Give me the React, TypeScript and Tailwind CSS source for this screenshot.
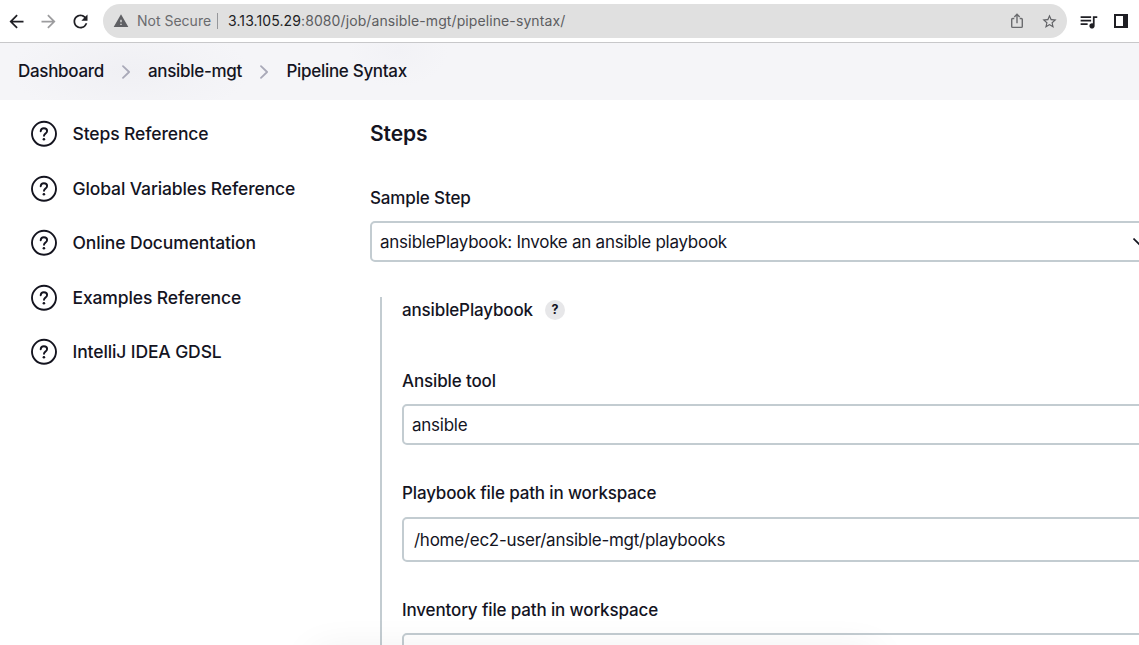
import type { ReactNode } from "react";
import { MdArrowBack, MdArrowForward, MdRefresh, MdWarning, MdStarBorder, MdQueueMusic } from "react-icons/md";

function Chevron() {
  return (
    <svg width="10" height="14" viewBox="0 0 10 14" fill="none" stroke="#a9a9b8" strokeWidth="1.8" className="shrink-0">
      <path d="M2 1.2 8.1 7 2 12.8" strokeLinecap="round" strokeLinejoin="round" />
    </svg>
  );
}

function HelpIcon() {
  return (
    <svg width="28" height="28" viewBox="0 0 28 28" fill="none" stroke="#14141f" strokeWidth="1.9" className="shrink-0">
      <circle cx="14" cy="13.800" r="12" />
      <path d="M10.7 11.200c.1-1.9 1.400-2.900 3.200-2.900 1.800 0 3.200 1 3.200 2.700 0 1.300-.8 2-1.700 2.600-1 .7-1.400 1.200-1.400 2.200" strokeLinecap="round" />
      <circle cx="13.9" cy="19.200" r="1.300" fill="#14141f" stroke="none" />
    </svg>
  );
}

function AddressBar() {
  return (
    <header className="flex h-[43px] items-center border-b border-[#c8c8ca] bg-white pl-[6px]">
      <MdArrowBack className="size-[21px] shrink-0 text-[#1f1f24]" />
      <MdArrowForward className="ml-[11px] size-[21px] shrink-0 text-[#9c9c9e]" />
      <MdRefresh className="ml-[11px] size-[21px] shrink-0 text-[#1f1f24]" />
      <div className="ml-3 flex h-[34px] w-[964px] shrink-0 items-center rounded-full bg-[#e0e0e0] pl-[10px] text-[14px]">
        <MdWarning className="size-4 shrink-0 text-[#5f6064]" />
        <span className="ml-2 w-[74px] pb-px whitespace-nowrap text-[#6a6b6e]">Not Secure</span>
        <span className="ml-[6px] h-4 w-px bg-[#96979a]" />
        <span className="ml-[10px] pb-px tracking-[0.1px] whitespace-nowrap text-[#5c5d60]">
          <span className="text-[#202124]">3.13.105.29</span>:8080/job/ansible-mgt/pipeline-syntax/
        </span>
        <svg width="14" height="16" viewBox="0 0 14 16" fill="none" stroke="#6a6b6e" strokeWidth="1.4" className="mr-[17px] ml-auto">
          <path d="M4.300 5.500h-1.600q-1 0-1 1v6.900q0 1 1 1h8.600q1 0 1-1V6.500q0-1-1-1H9.700M7 10.300V1.500M4.300 4 7 1.300 9.700 4" />
        </svg>
        <MdStarBorder className="mr-[9px] size-[17px] shrink-0 text-[#5f6064]" />
      </div>
      <MdQueueMusic className="ml-[11px] size-[21px] shrink-0 text-[#1f1f24]" />
      <div className="ml-[15px] h-[14px] w-[14px] shrink-0 border-2 border-r-[5px] border-[#1f1f24]" />
    </header>
  );
}

function Breadcrumbs() {
  return (
    <nav className="flex h-[57px] items-center bg-[#f5f5f8] bg-[radial-gradient(ellipse_120px_48px_at_130px_28px,#f0f0f4,transparent),radial-gradient(ellipse_50px_36px_at_398px_8px,#f2f2f6,transparent)] pl-[18px] text-[17px] font-medium tracking-[-0.31px] whitespace-nowrap">
      <span className="w-[103px] pt-px">Dashboard</span>
      <Chevron />
      <span className="ml-[17px] w-[111px] pt-px">ansible-mgt</span>
      <Chevron />
      <span className="ml-[17.5px] pt-px">Pipeline Syntax</span>
    </nav>
  );
}

const links = ["Steps Reference", "Global Variables Reference", "Online Documentation", "Examples Reference", "IntelliJ IDEA GDSL"];

function Label({ children }: { children: ReactNode }) {
  return <div className="flex h-6 items-center pt-[2px] text-[17px] font-medium tracking-[-0.14px] whitespace-nowrap">{children}</div>;
}

export default function App() {
  return (
    <div className="relative flex h-[645px] w-[1139px] flex-col overflow-hidden bg-white font-['Inter',sans-serif] text-[#14141f]">
      <AddressBar />
      <Breadcrumbs />
      <div className="flex min-h-0 flex-1">
        <aside className="w-[370px] shrink-0 pt-[6.75px] pl-[30px]">
          {links.map((t) => (
            <a key={t} className="flex h-[54.5px] items-center gap-[14.5px] text-[17.5px] font-medium tracking-[-0.12px] whitespace-nowrap">
              <HelpIcon />
              <span className="pt-px">{t}</span>
            </a>
          ))}
        </aside>
        <main className="w-[800px] shrink-0">
          <h1 className="mt-[18px] h-8 text-[21px] leading-8 font-semibold tracking-[-0.1px]">Steps</h1>
          <div className="mt-[36px]">
            <Label>Sample Step</Label>
          </div>
          <div className="mt-[11px] flex h-[41px] w-[780px] items-center rounded-[5px] border-2 border-[#c3ccd1] pl-2 text-[17px] tracking-[-0.26px] whitespace-nowrap">
            <span className="w-[753px] pt-[3px]">ansiblePlaybook: Invoke an ansible playbook</span>
            <svg width="12" height="8" viewBox="0 0 12 8" fill="none" stroke="#14141f" strokeWidth="1.6">
              <path d="m.5.5 5.500 5.500L11.500.5" />
            </svg>
          </div>
          <section className="mt-[35px] ml-[10px] h-[400px] border-l-2 border-[#c3ccd1] pt-px pl-5">
            <div className="flex items-center gap-3">
              <Label>ansiblePlaybook</Label>
              <span className="flex size-5 items-center justify-center rounded-full bg-[#e7e7e9] text-[12.5px] font-bold">?</span>
            </div>
            <div className="mt-[47px]">
              <Label>Ansible tool</Label>
            </div>
            <div className="mt-[11px] flex h-[41px] w-[780px] items-center rounded-[5px] border-2 border-[#c3ccd1] pt-[3px] pl-2 text-[17px] tracking-[-0.26px]">ansible</div>
            <div className="mt-[36px]">
              <Label>Playbook file path in workspace</Label>
            </div>
            <div className="mt-3 flex h-[45px] w-[780px] items-center rounded-[5px] border-2 border-[#c3ccd1] pt-[3px] pl-[10px] text-[17px] tracking-[-0.26px]">/home/ec2-user/ansible-mgt/playbooks</div>
            <div className="mt-[36px]">
              <Label>Inventory file path in workspace</Label>
            </div>
            <div className="mt-[11px] h-[45px] w-[780px] rounded-[5px] border-2 border-[#c3ccd1]" />
          </section>
        </main>
      </div>
      <div className="absolute top-[657px] left-[315px] h-5 w-[560px] shadow-[0_0_40px_rgba(0,0,0,0.12)]" />
    </div>
  );
}
